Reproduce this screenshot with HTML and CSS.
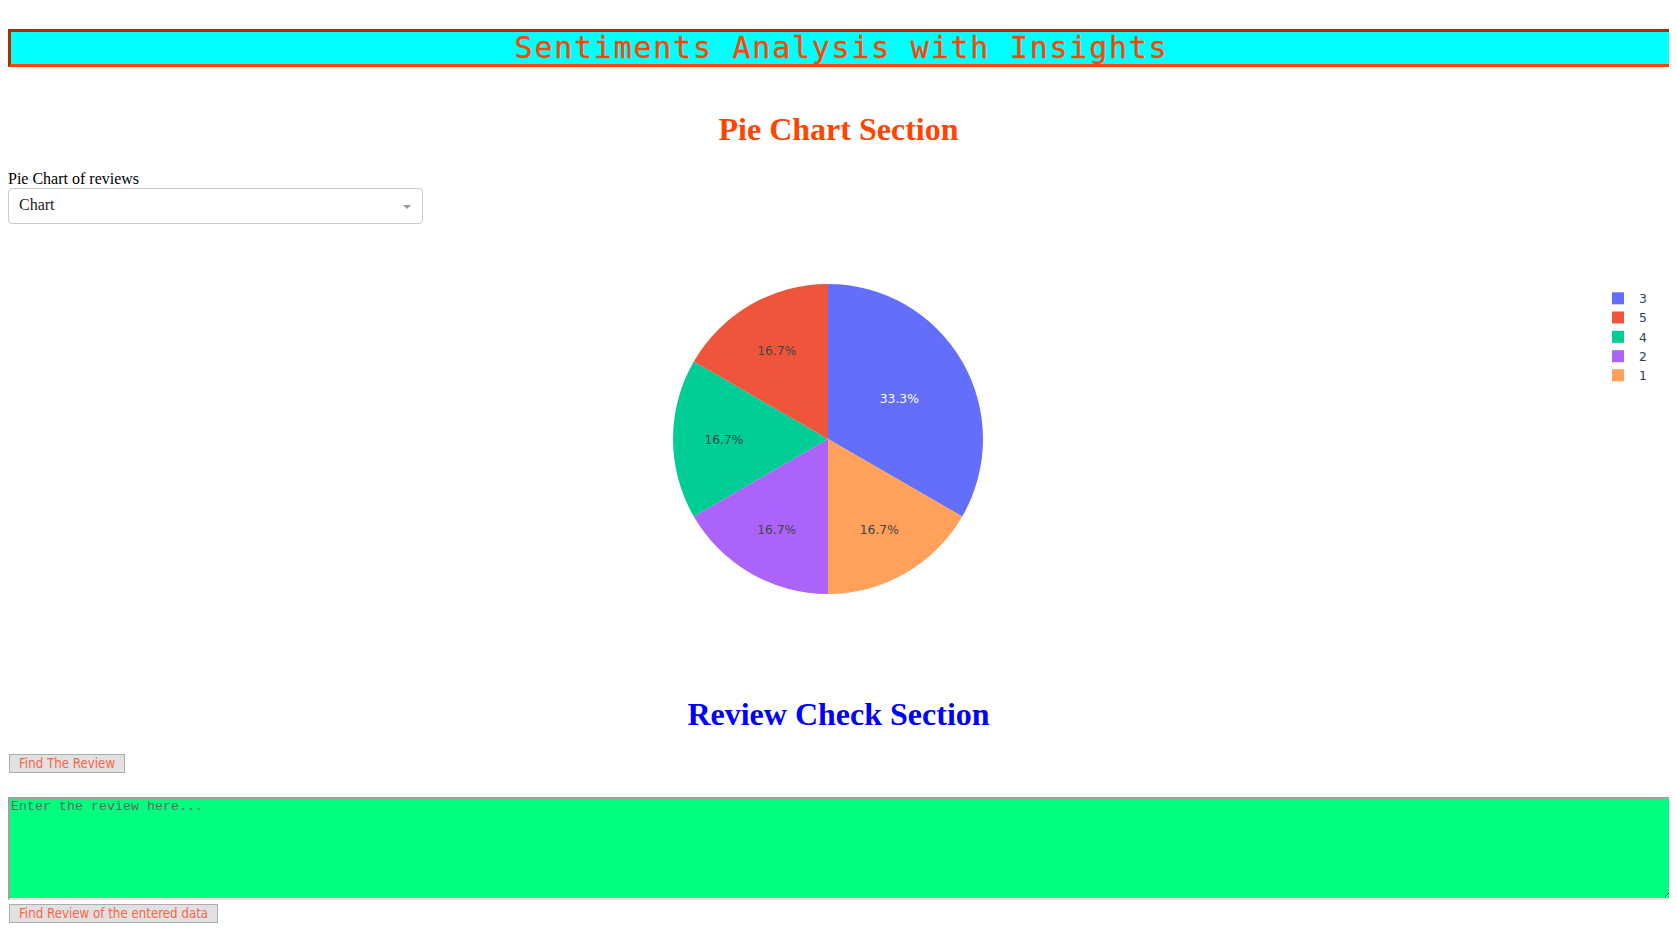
FILE: index.html
```html
<!DOCTYPE html>
<html lang="en">
<head>
<meta charset="utf-8">
<title>Sentiments Analysis with Insights</title>
<link rel="stylesheet" href="styles.css">
</head>
<body>
  <div class="app-title">Sentiments Analysis with Insights</div>

  <h1 class="section-title pie-title">Pie Chart Section</h1>

  <div class="field-label">Pie Chart of reviews</div>
  <div class="dropdown">
    <span class="dropdown-value">Chart</span>
    <span class="dropdown-arrow"></span>
  </div>

  <div class="graph">
    <svg class="graph-svg" width="1661" height="450" viewBox="0 0 1661 450" xmlns="http://www.w3.org/2000/svg">
      <g class="pie">
        <path d="M820,215 L820,60 A155,155 0 0 1 954.23,292.5 Z" fill="#636efa"/>
        <path d="M820,215 L954.23,292.5 A155,155 0 0 1 820,370 Z" fill="#ffa15a"/>
        <path d="M820,215 L820,370 A155,155 0 0 1 685.77,292.5 Z" fill="#ab63fa"/>
        <path d="M820,215 L685.77,292.5 A155,155 0 0 1 685.77,137.5 Z" fill="#00cc96"/>
        <path d="M820,215 L685.77,137.5 A155,155 0 0 1 820,60 Z" fill="#ef553b"/>
      </g>
      <g class="pie-labels">
        <text x="891.3" y="178.6" class="pie-text light">33.3%</text>
        <text x="768.7" y="131" class="pie-text">16.7%</text>
        <text x="716" y="220.3" class="pie-text">16.7%</text>
        <text x="768.7" y="309.6" class="pie-text">16.7%</text>
        <text x="871.3" y="309.6" class="pie-text">16.7%</text>
      </g>
      <g class="legend">
        <rect x="1604" y="68.3" width="12" height="12" fill="#636efa"/>
        <text x="1631" y="79" class="legend-text">3</text>
        <rect x="1604" y="87.5" width="12" height="12" fill="#ef553b"/>
        <text x="1631" y="98.2" class="legend-text">5</text>
        <rect x="1604" y="106.8" width="12" height="12" fill="#00cc96"/>
        <text x="1631" y="117.5" class="legend-text">4</text>
        <rect x="1604" y="126.2" width="12" height="12" fill="#ab63fa"/>
        <text x="1631" y="136.9" class="legend-text">2</text>
        <rect x="1604" y="145.2" width="12" height="12" fill="#ffa15a"/>
        <text x="1631" y="155.9" class="legend-text">1</text>
      </g>
    </svg>
  </div>

  <h1 class="section-title review-title">Review Check Section</h1>

  <button class="action-btn find-btn" type="button">Find The Review</button>

  <textarea class="review-input" placeholder="Enter the review here..."></textarea>

  <button class="action-btn submit-btn" type="button">Find Review of the entered data</button>
</body>
</html>
```

FILE: styles.css
```css
html, body {
  background: #ffffff;
}

body {
  margin: 8px;
  font-family: "Liberation Serif", "Times New Roman", serif;
  font-size: 16px;
}

.app-title {
  margin-top: 21px;
  width: 100%;
  border: 3px inset #ff4500;
  background: #00ffff;
  color: #ff4500;
  font-family: "DejaVu Sans Mono", monospace;
  font-size: 30px;
  letter-spacing: 1.75px;
  line-height: 32px;
  text-align: center;
  -webkit-text-stroke: 0.3px #ff4500;
}

.section-title {
  font-family: "Liberation Serif", "Times New Roman", serif;
  font-size: 32px;
  font-weight: bold;
  line-height: 37px;
  text-align: center;
  margin: 21px 0;
}

.pie-title {
  color: #ff4500;
  margin-top: 44px;
}

.review-title {
  color: #0000ff;
  margin-top: 22px;
}

.field-label {
  line-height: 19px;
}

.dropdown {
  box-sizing: border-box;
  width: 25%;
  height: 36px;
  border: 1px solid #cccccc;
  border-radius: 4px;
  padding: 0 10px 2px 10px;
  display: flex;
  align-items: center;
  justify-content: space-between;
  background: #ffffff;
}

.dropdown-value {
  color: #222222;
}

.dropdown-arrow {
  width: 0;
  height: 0;
  margin-top: 4px;
  margin-right: 1px;
  border-style: solid;
  border-width: 4px 4px 0 4px;
  border-color: #999999 transparent transparent transparent;
}

.graph {
  height: 450px;
}

.graph-svg {
  display: block;
}

.pie-text {
  font-family: "DejaVu Sans", Verdana, sans-serif;
  font-size: 12.3px;
  fill: #444444;
  text-anchor: middle;
}

.pie-text.light {
  fill: #ffffff;
}

.legend-text {
  font-family: "DejaVu Sans", Verdana, sans-serif;
  font-size: 12.3px;
  fill: #2a3f5f;
}

.action-btn {
  display: block;
  font-family: "DejaVu Sans Condensed", "DejaVu Sans", sans-serif;
  font-stretch: condensed;
  font-size: 13.2px;
  line-height: 15px;
  color: #ff6347;
  background: #e1e1e1;
  border: 1px solid #adadad;
  border-radius: 0;
  padding: 1px 9px;
  margin: 0 0 0 1px;
}

.find-btn {
  margin-top: 5px;
}

.review-input {
  display: block;
  box-sizing: content-box;
  width: 100%;
  height: 99px;
  margin: 24px 0 0 0;
  padding: 0 1px;
  border-style: solid;
  border-width: 2px;
  border-color: #a0a0a0 #e3e3e3 #e3e3e3 #a0a0a0;
  background: #00ff7f;
  font-family: "Liberation Mono", "Courier New", monospace;
  font-size: 13.33px;
  color: #000000;
}

.review-input::placeholder {
  color: #5a6e60;
}

.submit-btn {
  margin-top: 4px;
}
```
